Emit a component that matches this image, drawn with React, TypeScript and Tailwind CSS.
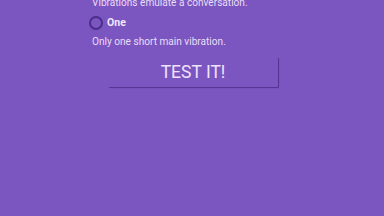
import React from "react";

export default function App() {
  return (
    <div className="w-[384px] h-[216px] bg-[#7b56c1] overflow-hidden relative" style={{ fontFamily: "Roboto, 'Liberation Sans', sans-serif" }}>
      <div className="pl-[92px] flex flex-col">
        <div className="text-[10.1px] leading-[12px] text-[#e8dcf6] mt-[-3px]">Vibrations emulate a conversation.</div>
        <div className="flex items-center mt-[6px] ml-[-3px] gap-[4px]">
          <div className="w-[14px] h-[14px] rounded-full border-2 border-[#4a2c8a]" />
          <span className="text-[10.5px] font-bold text-[#efe6fa]">One</span>
        </div>
        <div className="text-[10.1px] leading-[12px] text-[#e8dcf6] mt-[5px]">Only one short main vibration.</div>
        <div className="ml-[16px] mt-[9px] w-[170px] h-[30px] bg-[#7b56c1] flex items-center justify-center text-[17.5px] text-[#efe3fb] shadow-[1px_1px_1px_rgba(50,20,100,0.55)] rounded-[1px]">TEST IT!</div>
      </div>
    </div>
  );
}
